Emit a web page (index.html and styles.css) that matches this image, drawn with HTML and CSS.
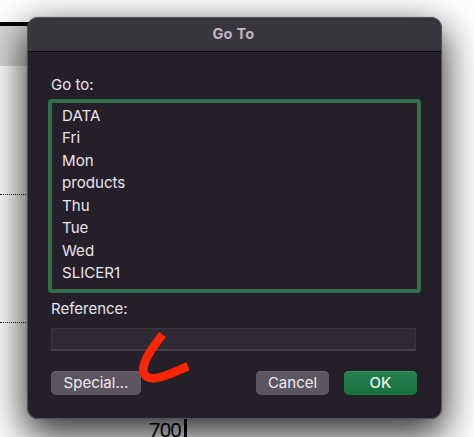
FILE: index.html
```
<!DOCTYPE html>
<html lang="en">
<head>
<meta charset="utf-8">
<title>Go To</title>
<link rel="stylesheet" href="styles.css">
</head>
<body>
<div class="sheet" aria-hidden="true">
  <div class="sheet-header"></div>
  <div class="sheet-row"></div>
  <div class="sheet-row"></div>
  <div class="sheet-chart"><span class="axis-label">700</span></div>
</div>
<main class="dialog">
  <header class="titlebar">Go To</header>
  <div class="content">
    <div class="label">Go to:</div>
    <ul class="names">
      <li>DATA</li>
      <li>Fri</li>
      <li>Mon</li>
      <li>products</li>
      <li>Thu</li>
      <li>Tue</li>
      <li>Wed</li>
      <li>SLICER1</li>
    </ul>
    <div class="label label-reference">Reference:</div>
    <div class="field"></div>
    <div class="actions">
      <button class="button special">Special...</button>
      <button class="button cancel">Cancel</button>
      <button class="button ok">OK</button>
    </div>
  </div>
</main>
<svg class="mark" viewBox="0 0 80 70" width="80" height="70"><path d="M37.5 14.5C28 27 19 39 18.2 49C18 55 22 58.4 29 58.2C40 57.5 51 51 63 46.2" fill="none" stroke="#fe2602" stroke-width="8.5"/></svg>
</body>
</html>
```
FILE: styles.css
```
* { box-sizing: border-box; }
body {
  margin: 0;
  width: 474px;
  height: 437px;
  overflow: hidden;
  position: relative;
  background: #fff;
  font-family: Inter, "Liberation Sans", sans-serif;
  font-size: 14px;
  color: #e8e4ea;
}
.sheet {
  position: absolute;
  inset: 0;
  padding-top: 22px;
}
.sheet-header {
  width: 200px;
  height: 44px;
  border-top: 4px solid #000;
  background: #d8d8d8;
}
.sheet-row {
  width: 200px;
  height: 129px;
  border-bottom: 1px dotted #222;
}
.sheet-row + .sheet-row { height: 128px; }
.sheet-chart {
  width: 187px;
  height: 114px;
  border-right: 3px solid #000;
  display: flex;
  align-items: flex-end;
  justify-content: flex-end;
  padding-right: 3px;
}
.axis-label {
  color: #000;
  font: 20px/20px "Open Sans", sans-serif;
  letter-spacing: -0.8px;
  -webkit-text-stroke: 0.2px #000;
  margin-bottom: -3px;
}
.dialog {
  position: relative;
  width: 415px;
  height: 402px;
  margin: 17px 0 0 27px;
  border-radius: 11px;
  overflow: hidden;
  background: #251f2a;
  border: 1px solid #55525a;
  box-shadow: 0 0 1px rgba(0,0,0,.5), 0 14px 38px 3px rgba(0,0,0,.8);
}
.titlebar {
  height: 34px;
  background: #39353d;
  border-bottom: 1px solid #0c090f;
  display: flex;
  align-items: center;
  justify-content: center;
  padding-right: 2px;
  padding-bottom: 2px;
  font-weight: 700;
  font-size: 14.6px;
  letter-spacing: 0.25px;
  color: #bcb6c1;
}
.content { padding: 23px 23px 0; }
.label {
  height: 20px;
  line-height: 20px;
  font-size: 15px;
}
.names {
  list-style: none;
  margin: 4px -3px 0;
  width: 373px;
  height: 194px;
  padding: 1.5px 0 0 10px;
  border: 4px solid #337049;
  border-radius: 4px;
  font-size: 15.1px;
  line-height: 22.5px;
}
.label-reference { margin-top: 6px; }
.field {
  width: 365px;
  height: 23px;
  margin-top: 9px;
  background: #2f2a33;
  border: 1px solid #39343d;
  border-bottom: 2px solid #454048;
}
.actions {
  display: flex;
  margin-top: 20px;
}
.button {
  height: 24px;
  padding: 0 0 1px;
  border: 0;
  border-radius: 5px;
  font: 15px/22px Inter, sans-serif;
  color: #efecf0;
  background: #5a555f;
  box-shadow: inset 0 1px #69646d;
}
.special { width: 90px; }
.cancel { width: 73px; margin-left: auto; }
.ok {
  width: 73px;
  margin: 0 1px 0 15px;
  font-weight: 500;
  background: linear-gradient(#268050, #17713d);
  box-shadow: inset 0 1px #379060;
}
.mark {
  position: absolute;
  left: 125px;
  top: 320px;
}
```
